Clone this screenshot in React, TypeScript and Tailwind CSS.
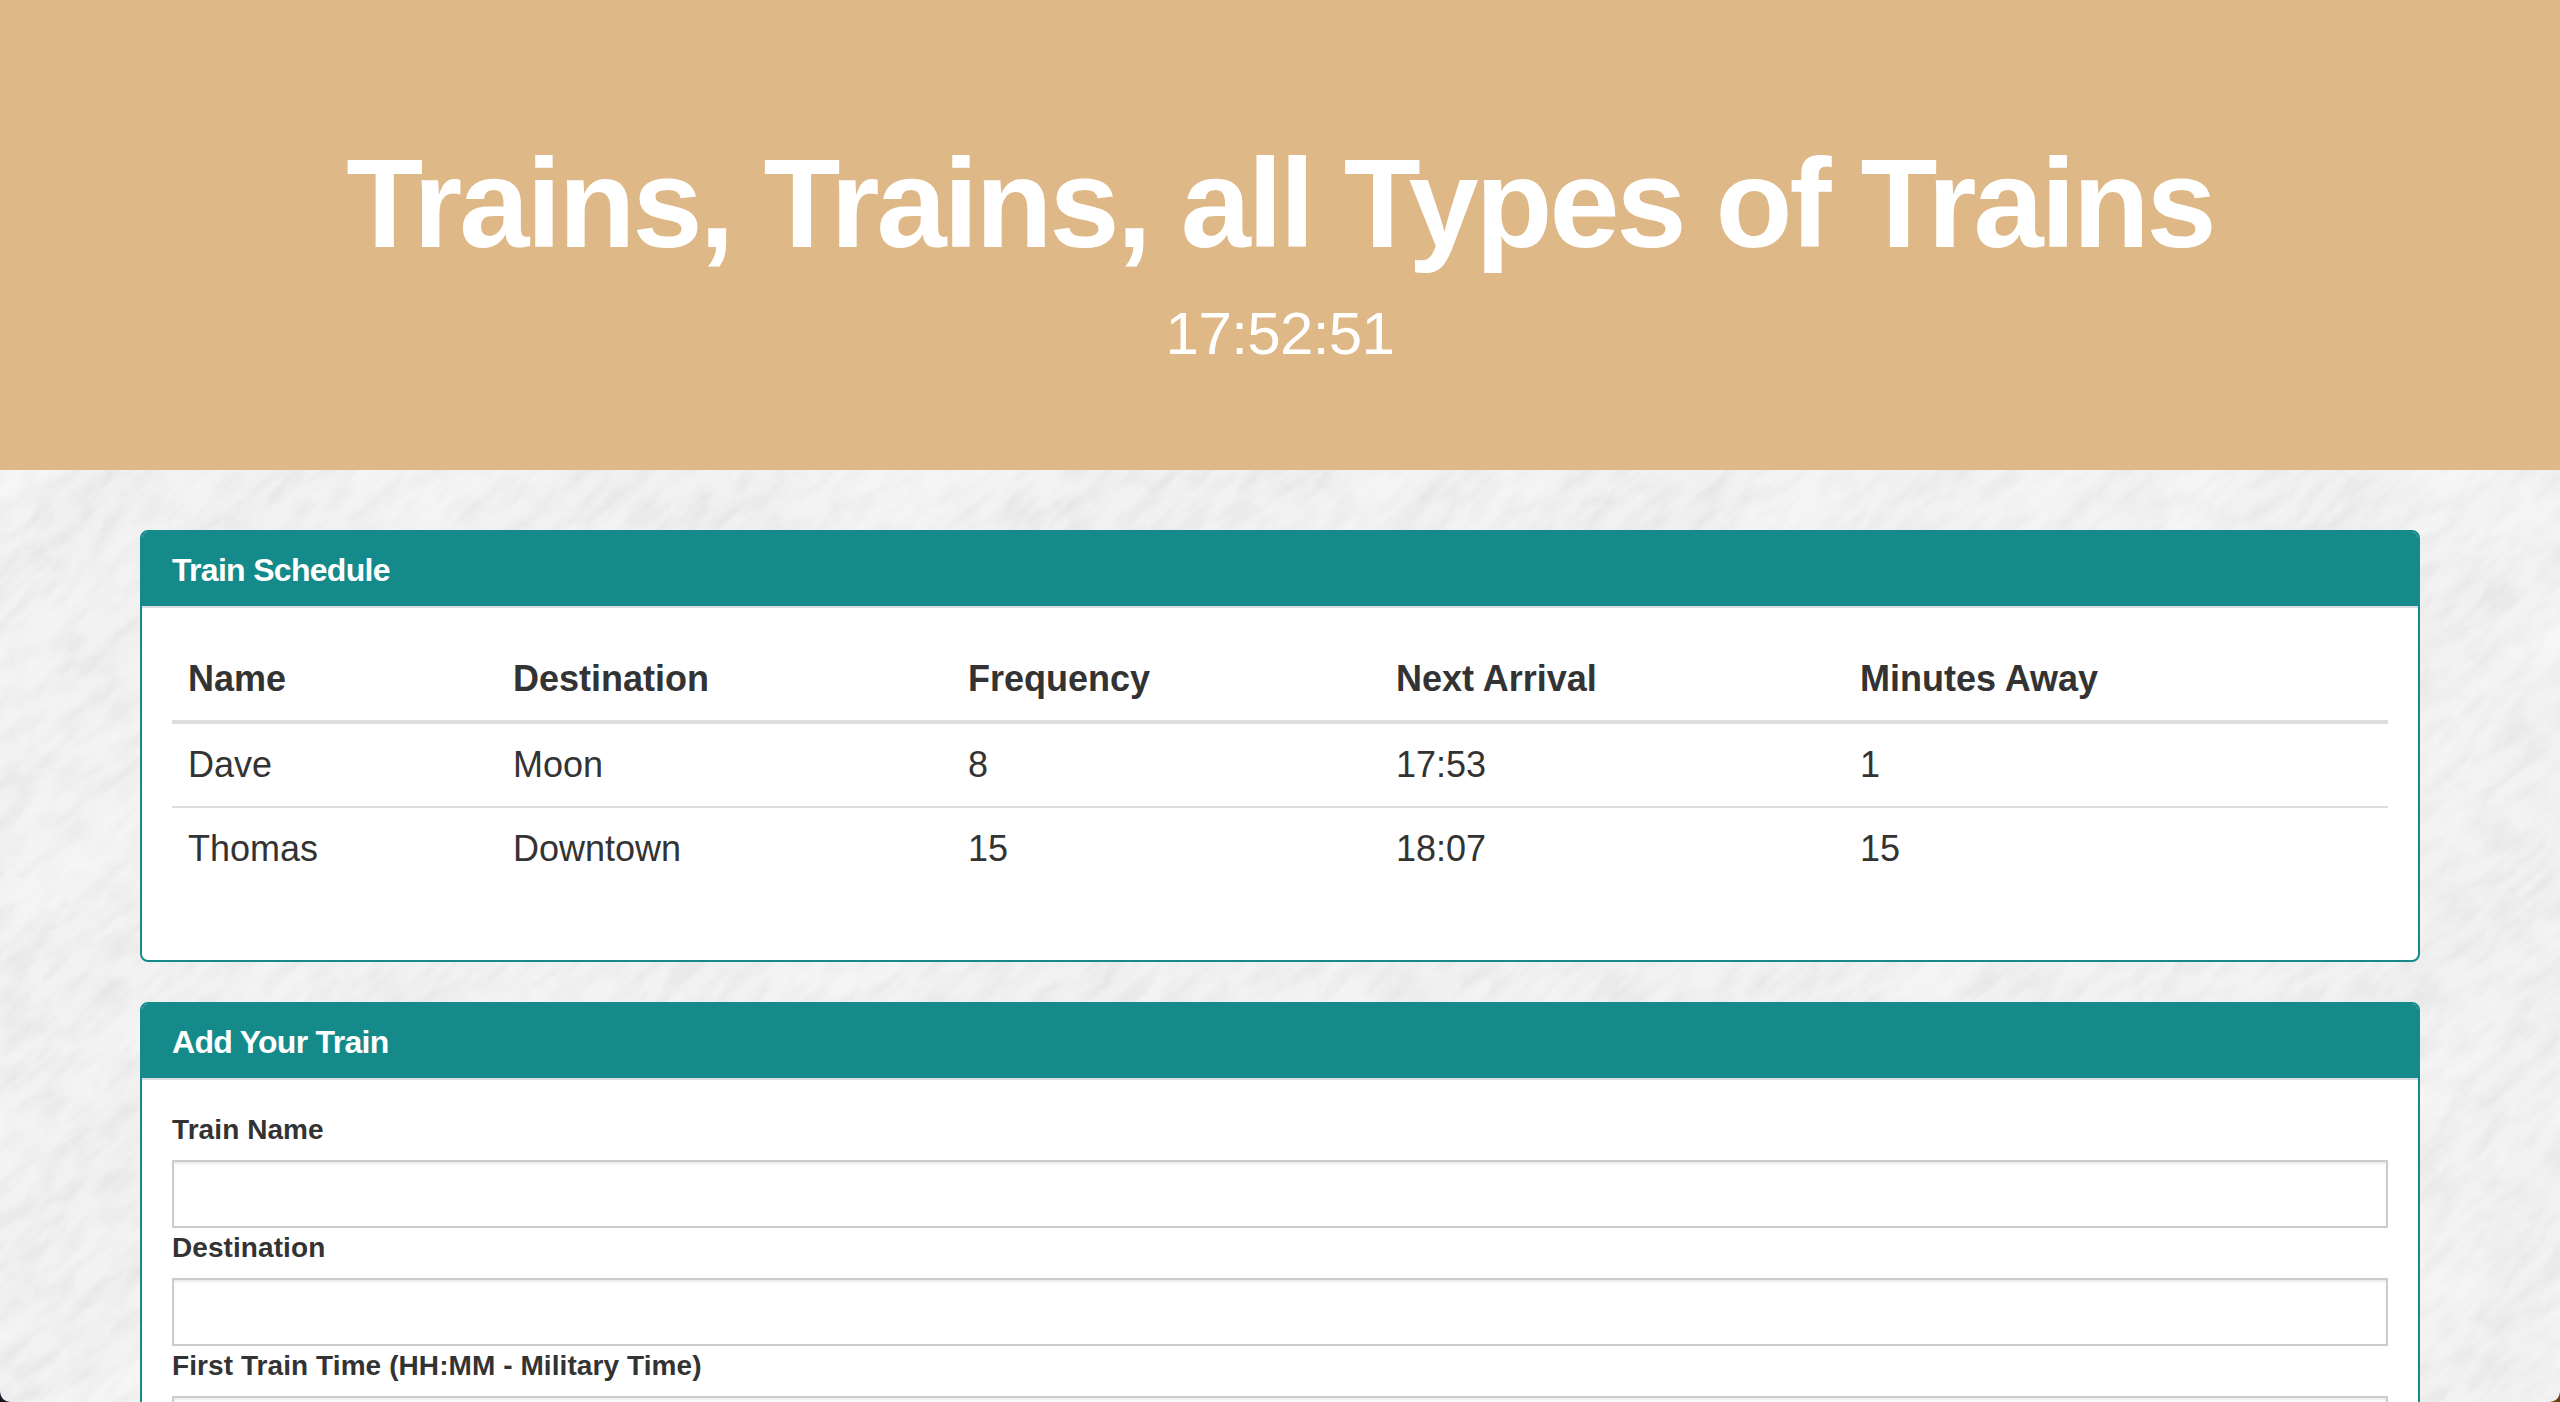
import React from 'react';

const trains = [
  { name: 'Dave', destination: 'Moon', frequency: '8', next: '17:53', away: '1' },
  { name: 'Thomas', destination: 'Downtown', frequency: '15', next: '18:07', away: '15' },
];

function Panel({ title, children }: { title: string; children: React.ReactNode }) {
  return (
    <section className="mb-10 rounded-lg border-2 border-[#148b8a] bg-white">
      <div className="flex h-[76px] items-center rounded-t-[6px] border-b-2 border-[#dddddd] bg-[#148b8a] px-[30px] pt-0.5 text-[32px] font-bold tracking-[-0.7px] text-white">
        {title}
      </div>
      <div className="p-[30px]">{children}</div>
    </section>
  );
}

function Field({ label }: { label: string }) {
  return (
    <div>
      <label className="mb-2.5 block text-[28px] leading-10 font-bold tracking-[0.08px] text-[#333333]">{label}</label>
      <input
        type="text"
        className="block h-[68px] w-full border-2 border-[#cccccc] bg-white shadow-[inset_0_2px_2px_rgba(0,0,0,0.075)]"
      />
    </div>
  );
}

// paper texture behind the panels
function PaperTexture() {
  return (
    <svg className="absolute top-[-800px] left-[-600px] h-[3000px] w-[3800px] rotate-[-42deg]">
      <filter id="streaks" x="0" y="0" width="100%" height="100%">
        <feTurbulence type="fractalNoise" baseFrequency="0.025 0.07" numOctaves="5" seed="23" />
        <feColorMatrix values="0 0 0 0 0.3  0 0 0 0 0.3  0 0 0 0 0.3  0.24 0 0 0 -0.09" />
      </filter>
      <filter id="blotches" x="0" y="0" width="100%" height="100%">
        <feTurbulence type="fractalNoise" baseFrequency="0.006 0.012" numOctaves="3" seed="4" />
        <feColorMatrix values="0 0 0 0 1  0 0 0 0 1  0 0 0 0 1  0 0.8 0 0 -0.3" />
      </filter>
      <rect width="100%" height="100%" filter="url(#streaks)" />
      <rect width="100%" height="100%" filter="url(#blotches)" />
    </svg>
  );
}

export default function App() {
  return (
    <div className="relative h-[1402px] overflow-hidden bg-[#f1f1f1] font-['Liberation_Sans',Arial,sans-serif] text-[#333333]">
      <PaperTexture />

      <div className="relative">
        <header className="h-[470px] bg-[#deb887] pt-[135px] text-center text-white">
          <h1 className="text-[126px] leading-[138.6px] font-bold tracking-[-3px]">Trains, Trains, all Types of Trains</h1>
          <h2 className="mt-[27px] text-[60px] leading-[66px] font-normal tracking-[-0.6px]">17:52:51</h2>
        </header>

        <main className="px-[140px] pt-[60px]">
          <Panel title="Train Schedule">
            <table className="mb-10 w-full table-fixed border-collapse text-left text-[36px] leading-[50px]">
              <thead>
                <tr className="border-b-4 border-[#dddddd]">
                  <th className="w-[325px] p-4 font-bold">Name</th>
                  <th className="w-[455px] p-4 font-bold">Destination</th>
                  <th className="w-[428px] p-4 font-bold">Frequency</th>
                  <th className="w-[464px] p-4 font-bold">Next Arrival</th>
                  <th className="p-4 font-bold">Minutes Away</th>
                </tr>
              </thead>
              <tbody>
                {trains.map((train, i) => (
                  <tr key={train.name} className={i > 0 ? 'border-t-2 border-[#dddddd]' : ''}>
                    <td className="p-4">{train.name}</td>
                    <td className="p-4">{train.destination}</td>
                    <td className="p-4">{train.frequency}</td>
                    <td className="p-4">{train.next}</td>
                    <td className="p-4">{train.away}</td>
                  </tr>
                ))}
              </tbody>
            </table>
          </Panel>

          <Panel title="Add Your Train">
            <Field label="Train Name" />
            <Field label="Destination" />
            <Field label="First Train Time (HH:MM - Military Time)" />
          </Panel>
        </main>
      </div>

      {/* window corners caught in the screenshot */}
      <svg className="absolute bottom-0 left-0 h-2.5 w-2.5" viewBox="0 0 10 10">
        <path d="M0 0Q1 9 10 10L0 10Z" fill="#1b1224" />
      </svg>
      <svg className="absolute right-0 bottom-0 h-2.5 w-2.5" viewBox="0 0 10 10">
        <path d="M10 0Q9 9 0 10L10 10Z" fill="#6b4210" />
      </svg>
    </div>
  );
}
